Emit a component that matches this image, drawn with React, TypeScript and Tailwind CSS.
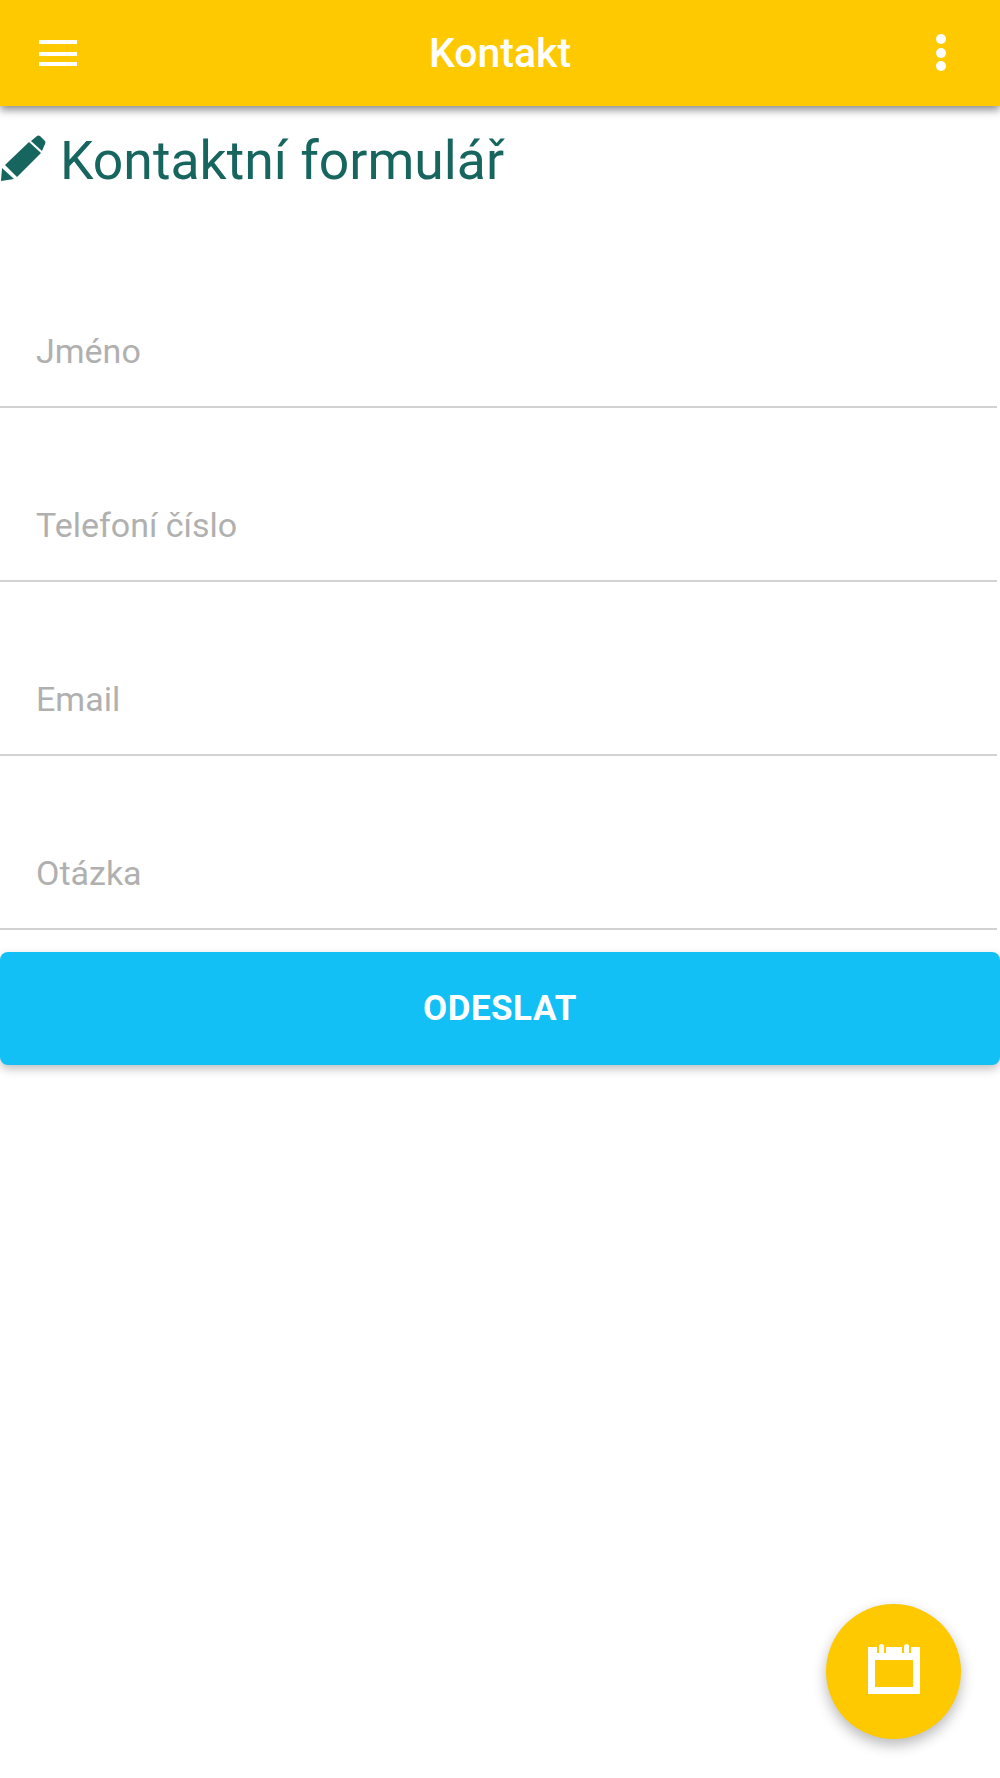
const FIELDS = ['Jméno', 'Telefoní číslo', 'Email', 'Otázka']

function MenuIcon(): JSX.Element {
  return (
    <svg width="38" height="26" viewBox="0 0 38 26" fill="#fff" aria-hidden="true">
      <rect x="0" y="0" width="38" height="4" />
      <rect x="0" y="12" width="38" height="4" />
      <rect x="0" y="22" width="38" height="4" />
    </svg>
  )
}

function MoreIcon(): JSX.Element {
  return (
    <svg width="12" height="38" viewBox="0 0 12 38" fill="#fff" aria-hidden="true">
      <circle cx="6" cy="5" r="5" />
      <circle cx="6" cy="19" r="5" />
      <circle cx="6" cy="32" r="5" />
    </svg>
  )
}

function PencilIcon(): JSX.Element {
  return (
    <svg className="-mt-[4px]" width="47" height="47" viewBox="0 0 45 47" fill="#17655f" aria-hidden="true">
      <path d="M0 46 L1 33 L13 44 Z" />
      <path d="M4 30 L28 7 L40 18 L16 42 Z" />
      <path d="M30 6 L36 1 Q37 0 39 1 L44 6 Q45 8 44 9 L41 16 Z" />
    </svg>
  )
}

function CalendarIcon(): JSX.Element {
  return (
    <svg width="52" height="50" viewBox="0 0 52 50" aria-hidden="true">
      <path
        fill="#fff"
        fillRule="evenodd"
        d="M0 3 H52 V50 H0 Z M7 16 V43 H45 V16 Z"
      />
      {/* gaps either side of the two binding pegs */}
      <rect x="9" y="3" width="9" height="6" fill="#ffc900" />
      <rect x="34" y="3" width="9" height="6" fill="#ffc900" />
      <rect x="11" y="0" width="5" height="10" rx="2.5" fill="#fff" />
      <rect x="36" y="0" width="5" height="10" rx="2.5" fill="#fff" />
    </svg>
  )
}

export default function App(): JSX.Element {
  return (
    <div className="relative h-[1778px] w-[1000px] overflow-hidden bg-white font-['Roboto',sans-serif]">
      <header className="relative z-10 grid h-[106px] grid-cols-[1fr_auto_1fr] items-center bg-[#ffc900] px-[39px] shadow-[0_4px_8px_rgba(0,0,0,0.45)]">
        <MenuIcon />
        <h2 className="pt-[2px] text-[41px] font-medium text-white">Kontakt</h2>
        <div className="mr-[14px] justify-self-end">
          <MoreIcon />
        </div>
      </header>

      <h1 className="mt-[28px] flex h-[53px] items-center gap-[13px] text-[53.5px] font-normal leading-none text-[#17655f]">
        <PencilIcon />
        Kontaktní formulář
      </h1>

      <form className="mt-[48px] flex flex-col">
        {FIELDS.map((name) => (
          <div key={name} className="h-[174px] pt-[93px] first:h-[173px] first:pt-[92px]">
            <input
              type="text"
              placeholder={name}
              className="h-[81px] w-[997px] border-b-2 border-[#d2d2d2] bg-transparent px-[36px] pb-[32px] text-[34px] outline-none placeholder:text-[#b0b0b0]"
            />
          </div>
        ))}
        <button
          type="button"
          className="mt-[22px] h-[113px] w-full rounded-[8px] bg-[#12c0f5] pt-[1px] text-[35px] font-bold tracking-[0.5px] text-white shadow-[0_4px_10px_rgba(0,0,0,0.25)]"
        >
          ODESLAT
        </button>
      </form>

      <button
        type="button"
        aria-label="Kalendář"
        className="absolute left-[826px] top-[1604px] flex h-[135px] w-[135px] items-center justify-center rounded-full bg-[#ffc900] pb-[5px] shadow-[0_6px_14px_rgba(0,0,0,0.28)]"
      >
        <CalendarIcon />
      </button>
    </div>
  )
}
